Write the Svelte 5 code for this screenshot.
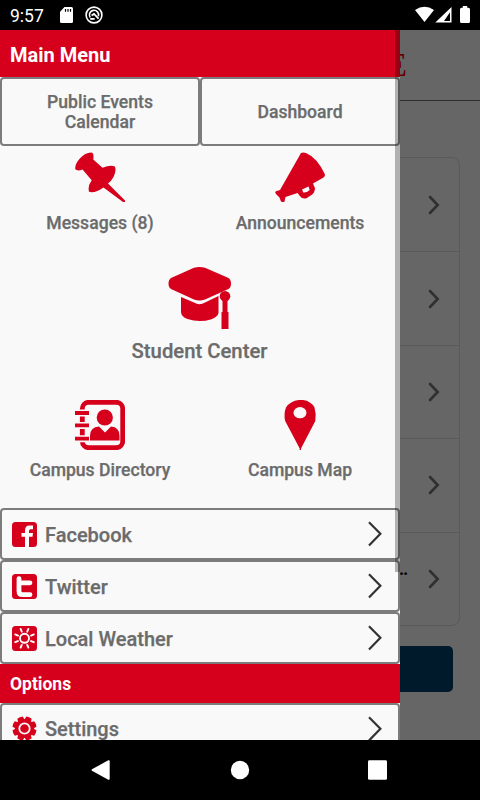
<script lang="ts">
  const rows = ["", "", "", "", "…"];
  const links = [
    { label: "Facebook", icon: "facebook" },
    { label: "Twitter", icon: "twitter" },
    { label: "Local Weather", icon: "weather" },
  ];
  const rays = [0, 45, 90, 135, 180, 225, 270, 315];
</script>

{#snippet icon(name: string)}
  <svg class="link-icon" viewBox="0 0 25 25">
    {#if name === "settings"}
      {#each rays as angle}
        <path d="M9 5 9.6 .8Q12.5-.2 15.4 .8L16 5Z" fill="#d6001c" transform="rotate({angle + 22.5} 12.5 12.5)" />
      {/each}
      <circle cx="12.5" cy="12.5" r="9.6" fill="#d6001c" />
      <circle cx="12.5" cy="12.5" r="5.2" fill="none" stroke="#f9f9f9" stroke-width="1.8" />
    {:else}
      <rect width="25" height="25" rx="3.5" fill="#d6001c" />
      {#if name === "facebook"}
        <path d="M13 25V14.7H9.5V11H13V8.2Q13 3.5 17.5 3.5H21V7.2H18.7Q17 7.2 17 8.8V11H21L20.5 14.7H17V25Z" fill="#fff" />
      {:else if name === "twitter"}
        <path d="M7 4.6V17.2Q7 20.7 10.5 20.7H18M7 8.8H18" fill="none" stroke="#fff" stroke-width="4.8" stroke-linecap="round" stroke-linejoin="round" />
      {:else}
        <circle cx="12.5" cy="12.3" r="4.5" fill="none" stroke="#fff" stroke-width="1.9" />
        {#each rays as angle}
          <path d="M12.5 2.2V5.2" stroke="#fff" stroke-width="1.9" stroke-linecap="round" transform="rotate({angle + 22.5} 12.5 12.3)" />
        {/each}
      {/if}
    {/if}
  </svg>
{/snippet}

{#snippet link(label: string, name: string)}
  <button class="link">
    {@render icon(name)}
    <span>{label}</span>
    <svg class="arrow" viewBox="0 0 14 26"><path d="M1 1.2 12.4 12.8 1 24.6" /></svg>
  </button>
{/snippet}

<div class="phone">
  <header class="status">
    <span class="time">9:57</span>
    <svg class="sd" viewBox="0 0 13 16">
      <path d="M4.5 0H11.5Q13 0 13 1.5V14.5Q13 16 11.5 16H1.5Q0 16 0 14.5V4.7Z" fill="#fff" />
      <path d="M5.5 2V4.7M8 2V4.7M10.5 2V4.7" stroke="#000" stroke-width="1.2" />
    </svg>
    <svg class="badge" viewBox="0 0 18 18" fill="none" stroke="#fff">
      <circle cx="9" cy="9" r="7.9" stroke-width="1.6" />
      <path d="M5.2 11.5A4.6 4.6 0 1 1 13.4 10.2" stroke-width="1.6" />
      <path d="M6.6 9.6 9 7.9 13.6 12.6" stroke-width="1.8" />
      <path d="M5.2 12.9H9.6" stroke-width="1.8" />
    </svg>
    <svg class="signals" viewBox="0 0 56 18" fill="#fff">
      <path d="M0 4Q9.5-2.3 19 4L9.5 16Z" />
      <path fill-rule="evenodd" d="M36.5 1V16.5H20.3ZM35 6.2 29 14.9H35Z" />
      <path d="M47.8 0H52.2V1.7H53.5Q55 1.7 55 3.2V15.5Q55 17 53.5 17H46.5Q45 17 45 15.5V3.2Q45 1.7 46.5 1.7H47.8Z" />
    </svg>
  </header>

  <main class="screen">
    <div class="page">
      <div class="page-head">E</div>
      <div class="card">
        {#each rows as text}
          <div class="card-row">
            <span>{text}</span>
            <svg viewBox="0 0 12 20"><path d="M2 2 9.7 10 2 18" /></svg>
          </div>
        {/each}
      </div>
      <div class="action"></div>
    </div>

    <aside class="drawer">
      <h1>Main Menu</h1>
      <div class="tabs">
        <button>Public Events<br />Calendar</button>
        <button>Dashboard</button>
      </div>

      <div class="tiles">
        <div class="tile">
          <svg width="50" height="50" viewBox="0 0 50 50" fill="#d6001c">
            <path d="M16 .5Q18.5.5 18.5 4.5L18.3 7.5 27.5 15.8Q34.5 12.8 39.5 14.2 42 17.5 38.5 25 36 29.5 33 31.5L50 48.5V50H48L28.5 35.5Q20 41.5 14 39.8 12.5 34 16.7 28.2L7.5 17.5Q2.5 19.5.3 17.3-.4 12.5 4.8 6.5 10.2.5 16 .5Z" />
          </svg>
          <span>Messages (8)</span>
        </div>
        <div class="tile">
          <svg width="50" height="50" viewBox="0 0 50 50" fill="#d6001c">
            <path d="M26 1Q28 .2 31 1 42 5.5 50 22.5 50 24.5 48.5 25.5L38 31.5 40 36.3Q39.8 40.7 36.5 43L31.5 46.2Q27 47.3 25.3 44.5L22.5 41 10.5 45 9.5 49.5Q8.5 50.5 6 49.5L4.5 45.5 1 42Q-.5 40 1 39.2L5 38ZM27 37.5 28.3 40.5Q31.5 41 34.7 38L33.5 34.5Z" fill-rule="evenodd" />
          </svg>
          <span>Announcements</span>
        </div>
        <div class="tile wide">
          <svg width="64" height="63" viewBox="0 0 64 63" fill="#d6001c">
            <path d="M26 .8Q31.5-.6 37 .8L60.5 11Q63 12.5 63 16.5 63 20.5 60.5 22L37 32.6Q31.5 34.5 26 32.6L3 22Q.5 20.5.5 16.5.5 12.5 3 11Z" />
            <path d="M13 30 26 35.5Q31.5 39 37 35.5L50.5 29V46Q49.5 50 43.5 52.2 31.5 56 19.5 52 13 49.5 13 45Z" />
            <circle cx="57" cy="29.3" r="5.3" />
            <path d="M54.5 31H59.5V45H60.5V62H53.5V45H54.5Z" />
          </svg>
          <span>Student Center</span>
        </div>
        <div class="tile low">
          <svg width="50" height="50" viewBox="0 0 50 50">
            <rect x="7.3" y="2.3" width="40.4" height="45.4" rx="6.5" fill="none" stroke="#d6001c" stroke-width="4.8" />
            <path d="M0 13H14M0 25.4H14M0 38.7H14" stroke="#f9f9f9" stroke-width="7" stroke-dasharray="0 4 6 20" />
            <path d="M0 13H14M0 25.4H14M0 38.7H14" stroke="#d6001c" stroke-width="3.8" />
            <circle cx="29.8" cy="17.5" r="8.1" fill="#d6001c" />
            <path d="M15 40.5V36Q15 27 24 26.5L30 32.5 36 26.5Q44.5 27 44.5 36V40.5Z" fill="#d6001c" />
            <path d="M26.5 26 30 31.5 33.5 26Z" fill="#f9f9f9" />
          </svg>
          <span>Campus Directory</span>
        </div>
        <div class="tile low">
          <svg width="34" height="50" viewBox="0 0 34 50">
            <path d="M16 0H20Q28 1 31.5 7.5 33.5 14 32.3 21L18 48.5V50H16.7V48.5L2.2 21Q.5 14 3 7.5 7 1 16 0Z" fill="#d6001c" />
            <ellipse cx="17" cy="12.7" rx="6.5" ry="5.6" fill="#f9f9f9" />
          </svg>
          <span>Campus Map</span>
        </div>
      </div>

      {#each links as item}
        {@render link(item.label, item.icon)}
      {/each}
      <h2>Options</h2>
      {@render link("Settings", "settings")}
      <div class="scrollbar"></div>
    </aside>
  </main>

  <nav>
    <svg width="20" height="20" viewBox="0 0 20 20"><path d="M17.3.3Q18.7-.3 18.7 1.2V18.8Q18.7 20.3 17.3 19.7L1 10.8Q0 10 1 9.2Z" /></svg>
    <svg width="20" height="20" viewBox="0 0 20 20"><circle cx="10" cy="10" r="9.2" /></svg>
    <svg width="20" height="20" viewBox="0 0 20 20"><rect y=".3" width="19" height="19.5" rx="1.4" /></svg>
  </nav>
</div>

<style>
  :global(body) {
    margin: 0;
    background: #000;
  }

  .phone {
    display: flex;
    flex-direction: column;
    width: 480px;
    height: 800px;
    overflow: hidden;
    font-family: Roboto, "Liberation Sans", sans-serif;
    background: #000;
  }

  svg {
    display: block;
    flex: none;
  }

  .status {
    display: flex;
    align-items: center;
    box-sizing: border-box;
    height: 30px;
    padding: 0 9px 0 10px;
    color: #fff;
  }

  .time {
    width: 50px;
    font-size: 17.5px;
    line-height: 30px;
    padding-top: 1px;
  }

  .sd {
    width: 13px;
    height: 16px;
  }

  .badge {
    width: 18px;
    height: 18px;
    margin-left: 12px;
  }

  .signals {
    width: 56px;
    height: 18px;
    margin-left: auto;
  }

  .screen {
    position: relative;
    height: 710px;
    overflow: hidden;
    background: #666;
  }

  .page-head {
    box-sizing: border-box;
    height: 71px;
    padding-right: 73px;
    border-bottom: 1px solid #2d2d2d;
    color: #600;
    font-family: "Liberation Serif", serif;
    font-size: 34px;
    line-height: 70px;
    text-align: right;
  }

  .card {
    box-sizing: border-box;
    margin: 56px 20px 0;
    height: 469px;
    display: grid;
    grid-template-rows: repeat(5, 1fr);
    border: 1px solid #5a5a5a;
    border-radius: 8px;
  }

  .card-row {
    display: flex;
    align-items: center;
    justify-content: flex-end;
    padding-right: 19px;
  }

  .card-row + .card-row {
    border-top: 1px solid #5a5a5a;
  }

  .card-row span {
    margin-right: 20px;
    color: #000;
    font-size: 18px;
    font-weight: 700;
    line-height: 30px;
    padding-bottom: 20px;
  }

  .card-row svg {
    width: 12px;
    height: 20px;
  }

  .card-row path {
    fill: none;
    stroke: #303030;
    stroke-width: 2.6;
    stroke-linecap: round;
  }

  .action {
    height: 46px;
    margin: 20px 27px 0;
    border-radius: 5px;
    background: #001a2c;
  }

  .drawer {
    position: absolute;
    top: 0;
    left: 0;
    width: 400px;
    height: 710px;
    overflow: hidden;
    background: #f9f9f9;
    color: #6b6b6b;
  }

  h1,
  h2 {
    margin: 0;
    padding-left: 10px;
    background: #d6001c;
    color: #fff;
    font-weight: 700;
  }

  h1 {
    height: 47px;
    font-size: 20px;
    line-height: 50px;
  }

  h2 {
    height: 39px;
    font-size: 17.5px;
    line-height: 40px;
  }

  button {
    box-sizing: border-box;
    border: 2px solid #7c7c7c;
    border-radius: 4px;
    background: #f9f9f9;
    color: #6b6b6b;
    font-family: inherit;
    font-weight: 500;
  }

  button,
  .tile {
    -webkit-text-stroke: 0.25px #6b6b6b;
  }

  .tabs {
    display: grid;
    grid-template-columns: 1fr 1fr;
    height: 69px;
  }

  .tabs button {
    padding-top: 2px;
    font-size: 17.6px;
    line-height: 20px;
  }

  .tiles {
    display: grid;
    grid-template-columns: 1fr 1fr;
    grid-template-rows: 115px 133px 114px;
    padding-top: 6px;
    height: 356px;
  }

  .tile {
    display: flex;
    flex-direction: column;
    align-items: center;
    font-size: 17.6px;
    font-weight: 500;
    line-height: 20px;
    gap: 11px;
  }

  .low {
    gap: 10px;
  }

  .wide {
    grid-column: 1 / 3;
    padding-right: 1px;
    font-size: 20.3px;
  }

  .link {
    display: flex;
    align-items: center;
    width: 400px;
    height: 52px;
    padding: 0 16px 0 10px;
    font-size: 20px;
    text-align: left;
  }

  h2 + .link {
    padding-bottom: 1px;
  }

  .link span {
    flex: 1;
    margin-left: 8px;
    padding-top: 1px;
  }

  .link-icon {
    width: 25px;
    height: 25px;
  }

  .arrow {
    width: 14px;
    height: 26px;
  }

  .arrow path {
    fill: none;
    stroke: #333;
    stroke-width: 2.2;
  }

  .scrollbar {
    position: absolute;
    top: 0;
    right: 0;
    width: 5px;
    height: 542px;
    background: rgba(0, 0, 0, 0.29);
  }

  nav {
    display: flex;
    justify-content: space-between;
    align-items: center;
    height: 60px;
    padding: 0 92px 0 91px;
    fill: #fff;
  }
</style>
